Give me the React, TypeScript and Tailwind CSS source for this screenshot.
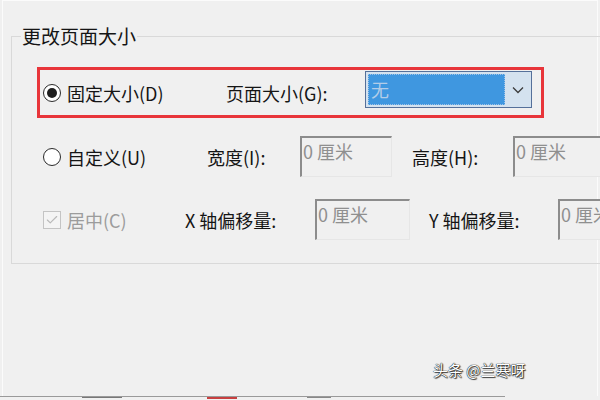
import { Check } from 'lucide-react';

const Radio = ({ checked }: { checked?: boolean }) => (
    <span className="w-[18px] h-[18px] rounded-full border-[1.5px] border-[#2a2a2a] bg-white flex items-center justify-center shrink-0">
        {checked && <span className="w-[10px] h-[10px] rounded-full bg-[#1e1e1e]" />}
    </span>
);

const SizeInput = ({ className = '' }: { className?: string }) => (
    <div className={`h-[41px] shrink-0 border-t-2 border-l-2 border-b border-r border-t-[#8c8c8c] border-l-[#8c8c8c] border-b-[#e6e6e6] border-r-[#e6e6e6] bg-[#f0f0f0] pl-[1px] pt-[1px] text-[18px] leading-[24px] text-[#8f8f8f] ${className}`}>
        0 厘米
    </div>
);

const PageSizeDialog = () => {
    return (
        <div className="w-[600px] h-[400px] bg-[#f0f0f0] overflow-hidden flex flex-col font-['Noto_Sans_CJK_SC',sans-serif] text-[18px] leading-[24px] text-[#151515]">
            <div className="flex-1 ml-[2px] mr-[2px] border-l border-r border-t border-[#fbfbfb]">
                <fieldset className="ml-[8px] mt-[23px] w-[587px] h-[240px] border border-[#d9d9d9] overflow-visible">
                    <legend className="ml-[9px] px-[1px] text-[19px] leading-[24px]">更改页面大小</legend>

                    {/* row 1 - fixed size, highlighted */}
                    <div className="ml-[25px] mt-[19px] w-[507px] h-[51px] border-[3px] border-[#e8353a] flex items-center">
                        <div className="w-[186px] pl-[3px] flex items-center gap-[6px]">
                            <Radio checked />
                            <span>固定大小(D)</span>
                        </div>
                        <span className="w-[139px]">页面大小(G):</span>
                        <div className="self-start mt-[1px] w-[167px] h-[37px] border border-[#55709a] bg-[#d4e2ef] flex items-center">
                            <div className="ml-[2px] w-[137px] h-[31px] bg-[#3f97e0] border border-dotted border-[#9fc2e6] pl-[2px] text-[#b3cde8] leading-[28px]">无</div>
                            <div className="flex-1 flex items-center justify-center">
                                <svg width="12" height="8" viewBox="0 0 12 8" fill="none" stroke="#3c3c3c" strokeWidth="1.3">
                                    <path d="M1 1.5 L6 6.5 L11 1.5" />
                                </svg>
                            </div>
                        </div>
                    </div>

                    {/* row 2 - custom */}
                    <div className="ml-[31px] mt-[18px] h-[41px] flex items-center">
                        <div className="w-[164px] flex items-center gap-[6px]">
                            <Radio />
                            <span>自定义(U)</span>
                        </div>
                        <span className="w-[93px]">宽度(I):</span>
                        <SizeInput className="w-[92px]" />
                        <span className="ml-[20px] w-[101px]">高度(H):</span>
                        <SizeInput className="w-[100px]" />
                    </div>

                    {/* row 3 - center / offsets */}
                    <div className="ml-[31px] mt-[22px] h-[41px] flex items-center">
                        <div className="w-[142px] flex items-center gap-[6px]">
                            <span className="w-[18px] h-[18px] border border-[#c4c4c4] bg-[#f4f4f4] flex items-center justify-center">
                                <Check size={14} strokeWidth={2} color="#b9b9b9" />
                            </span>
                            <span className="text-[#9c9c9c]">居中(C)</span>
                        </div>
                        <span className="w-[130px]">X 轴偏移量:</span>
                        <SizeInput className="w-[95px]" />
                        <span className="ml-[19px] w-[129px]">Y 轴偏移量:</span>
                        <SizeInput className="w-[100px]" />
                    </div>
                </fieldset>

                <div className="mt-[96px] ml-[430px] text-[15px] leading-[20px] text-white [text-shadow:0_0_1px_#000,0_0_1px_#000,1px_1px_1px_#444]">
                    头条 @兰寒呀
                </div>
            </div>

            {/* strip of the next picture */}
            <div className="h-[4px] flex items-start">
                <div className="w-[505px] h-[1px] bg-[#9a9a9a] flex">
                    <span className="ml-[82px] mt-[1px] w-[40px] h-[1px] bg-[#777]" />
                    <span className="ml-[85px] mt-[1px] w-[30px] h-[2px] bg-[#c84040]" />
                    <span className="ml-[70px] mt-[1px] w-[24px] h-[1px] bg-[#888]" />
                </div>
            </div>
        </div>
    );
};

export default PageSizeDialog;
